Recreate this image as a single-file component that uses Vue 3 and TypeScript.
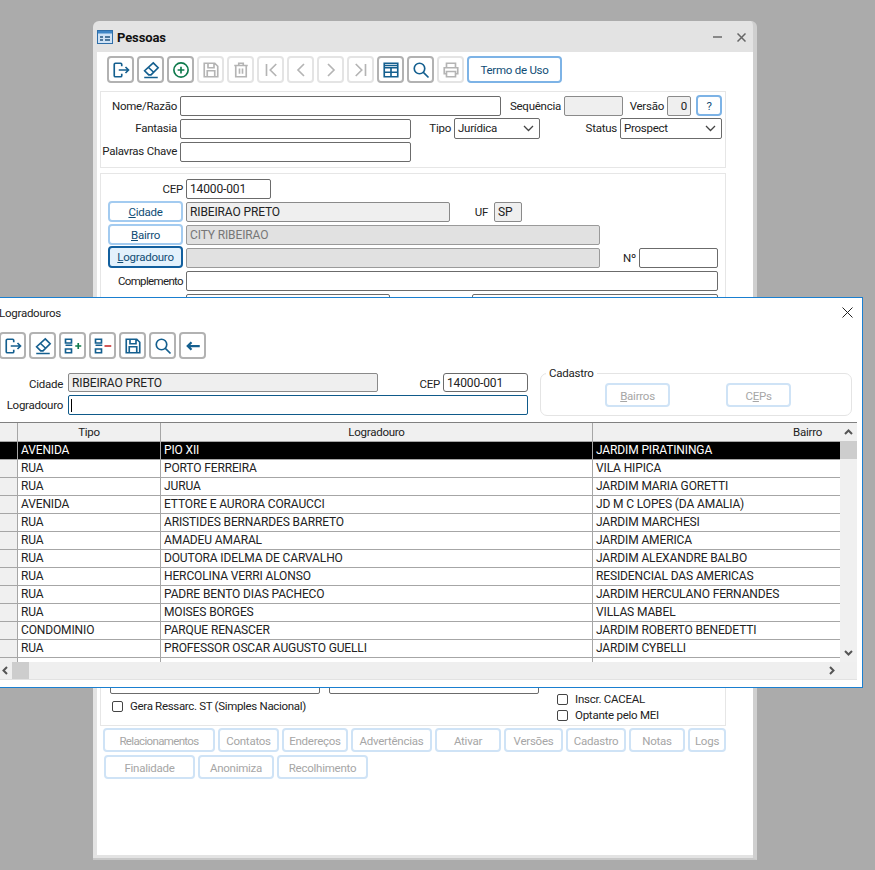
<script setup lang="ts">
interface Tool { d: string; tone: string }
const exit = 'M13 7V4.5A1.5 1.5 0 0 0 11.5 3h-7A1.5 1.5 0 0 0 3 4.5v15A1.5 1.5 0 0 0 4.5 21h7a1.5 1.5 0 0 0 1.500-1.500V17M9 12h13M18 8l4 4-4 4'
const eraser = 'M15 2.500l6.500 6.500-9.500 9.500H9L3.500 13zM8 8l7.500 7M3 22h18'
const search = 'M10 3a7 7 0 1 1 0 14a7 7 0 1 1 0-14zM15.500 15.500L22 22'
const save = 'M3 3h14l4 4v14H3zM8 3v6h8V3M7 21v-8h10v8'
const mainTools: Tool[] = [
  { d: exit, tone: 'blue' },
  { d: eraser, tone: 'blue' },
  { d: 'M12 2.500a9.500 9.500 0 1 1 0 19a9.500 9.500 0 1 1 0-19zM12 7.500v9M7.500 12h9', tone: 'green' },
  { d: save, tone: 'off' },
  { d: 'M3 6h18M9 6V3h6v3M5 6v15h14V6M10 10v7M14 10v7', tone: 'off' },
  { d: 'M6 4v16M19 4l-8 8 8 8', tone: 'off' },
  { d: 'M16 4l-8 8 8 8', tone: 'off' },
  { d: 'M8 4l8 8-8 8', tone: 'off' },
  { d: 'M18 4v16M5 4l8 8-8 8', tone: 'off' },
  { d: 'M3 3h18v18H3zM3 6h18M3 9h18M3 15h18M12 9v12', tone: 'blue' },
  { d: search, tone: 'blue' },
  { d: 'M6 8V3h12v5M6 17H3V9h18v8h-3M6 14h12v7H6z', tone: 'off' },
]
const listShape = 'M2 3h8v5H2zM2 11h9M2 16h8v5H2z'
const modalTools: { d: string; extra?: string; extraTone?: string; sw?: number }[] = [
  { d: exit },
  { d: eraser },
  { d: listShape, extra: 'M15 12h8M19 8v8', extraTone: 'green' },
  { d: listShape, extra: 'M14 12h9', extraTone: 'red' },
  { d: save },
  { d: search },
  { d: 'M21 12H5M10 7l-5 5 5 5', sw: 3 },
]
const actionRows = [
  [
    { t: 'Relacionamentos', w: 112, tight: true }, { t: 'Contatos', w: 61 }, { t: 'Endereços', w: 66 },
    { t: 'Advertências', w: 81 }, { t: 'Ativar', w: 66 }, { t: 'Versões', w: 59 },
    { t: 'Cadastro', w: 60 }, { t: 'Notas', w: 56 }, { t: 'Logs', w: 38 },
  ],
  [{ t: 'Finalidade', w: 91 }, { t: 'Anonimiza', w: 76 }, { t: 'Recolhimento', w: 91 }],
]
const rows = [
  ['AVENIDA', 'PIO XII', 'JARDIM PIRATININGA'],
  ['RUA', 'PORTO FERREIRA', 'VILA HIPICA'],
  ['RUA', 'JURUA', 'JARDIM MARIA GORETTI'],
  ['AVENIDA', 'ETTORE E AURORA CORAUCCI', 'JD M C LOPES (DA AMALIA)'],
  ['RUA', 'ARISTIDES BERNARDES BARRETO', 'JARDIM MARCHESI'],
  ['RUA', 'AMADEU AMARAL', 'JARDIM AMERICA'],
  ['RUA', 'DOUTORA IDELMA DE CARVALHO', 'JARDIM ALEXANDRE BALBO'],
  ['RUA', 'HERCOLINA VERRI ALONSO', 'RESIDENCIAL DAS AMERICAS'],
  ['RUA', 'PADRE BENTO DIAS PACHECO', 'JARDIM HERCULANO FERNANDES'],
  ['RUA', 'MOISES BORGES', 'VILLAS MABEL'],
  ['CONDOMINIO', 'PARQUE RENASCER', 'JARDIM ROBERTO BENEDETTI'],
  ['RUA', 'PROFESSOR OSCAR AUGUSTO GUELLI', 'JARDIM CYBELLI'],
  ['', '', ''],
]
</script>

<template>
  <div class="desktop">
    <section class="window">
      <header class="win-title">
        <svg class="win-icon" width="16" height="14" viewBox="0 0 16 14">
          <rect x="0.500" y="0.500" width="15" height="13" fill="#cfe2f5" stroke="#2f6ea8" />
          <rect x="1" y="1" width="14" height="2.500" fill="#3f86c6" />
          <path d="M3 7h3M8 7h5M3 10h3M8 10h5" stroke="#24557f" stroke-width="1.500" />
        </svg>
        <span class="win-name">Pessoas</span>
        <span class="win-min"></span>
        <svg class="win-close" width="9" height="9" viewBox="0 0 9 9"><path d="M0.500 0.500l8 8M8.500 0.500l-8 8" stroke="#666" stroke-width="1.500" /></svg>
      </header>
      <div class="win-body">
        <div class="toolbar">
          <button v-for="(tool, i) in mainTools" :key="i" class="tool" :class="{ 'tool-off': tool.tone === 'off' }">
            <svg width="18" height="18" viewBox="0 0 24 24" fill="none" stroke-width="2.200" :class="'tone-' + tool.tone"><path :d="tool.d" /></svg>
          </button>
          <button class="btn btn-termo">Termo de Uso</button>
        </div>

        <div class="panel panel-top">
          <div class="row row-a">
            <span class="lbl w76">Nome/Razão</span>
            <div class="in w321"></div>
            <span class="lbl w60">Sequência</span>
            <div class="in ro w59"></div>
            <span class="lbl w41">Versão</span>
            <div class="in ro w24 num">0</div>
            <button class="btn btn-help">?</button>
          </div>
          <div class="row row-b">
            <span class="lbl w76">Fantasia</span>
            <div class="in w231"></div>
            <span class="lbl w40">Tipo</span>
            <div class="in sel w86">Jurídica<svg width="11" height="7" viewBox="0 0 11 7"><path d="M1 1l4.500 4.500L10 1" fill="none" stroke="#444" stroke-width="1.300" /></svg></div>
            <span class="lbl w77">Status</span>
            <div class="in sel w102">Prospect<svg width="11" height="7" viewBox="0 0 11 7"><path d="M1 1l4.500 4.500L10 1" fill="none" stroke="#444" stroke-width="1.300" /></svg></div>
          </div>
          <div class="row row-c">
            <span class="lbl w76">Palavras Chave</span>
            <div class="in w231"></div>
          </div>
        </div>

        <div class="panel panel-addr">
          <div class="row row-cep">
            <span class="lbl w82">CEP</span>
            <div class="in w85 caps">14000-001</div>
          </div>
          <div class="row row-link">
            <button class="btn btn-link"><u>C</u>idade</button>
            <div class="in ro w264 caps">RIBEIRAO PRETO</div>
            <span class="lbl w38">UF</span>
            <div class="in ro w28 caps">SP</div>
          </div>
          <div class="row row-link">
            <button class="btn btn-link"><u>B</u>airro</button>
            <div class="in dis w414 caps">CITY RIBEIRAO</div>
          </div>
          <div class="row row-link">
            <button class="btn btn-link btn-active"><u>L</u>ogradouro</button>
            <div class="in dis w414"></div>
            <span class="lbl w36">Nº</span>
            <div class="in w79"></div>
          </div>
          <div class="row row-comp">
            <span class="lbl w82 tight">Complemento</span>
            <div class="in w532"></div>
          </div>
          <div class="row row-under">
            <div class="in w204"></div>
            <div class="in w246"></div>
          </div>
          <div class="lower">
            <div class="lower-left">
              <div class="pair">
                <div class="in w210"></div>
                <div class="in w210"></div>
              </div>
              <label class="check check-gera"><i></i>Gera Ressarc. ST (Simples Nacional)</label>
            </div>
            <div class="lower-right">
              <label class="check"><i></i>Inscr. CACEAL</label>
              <label class="check"><i></i>Optante pelo MEI</label>
            </div>
          </div>
        </div>

        <div v-for="(line, i) in actionRows" :key="i" class="actions" :class="{ 'actions-2': i === 1 }">
          <button v-for="a in line" :key="a.t" class="btn btn-off" :class="{ tight: 'tight' in a }" :style="{ width: a.w + 'px' }">{{ a.t }}</button>
        </div>
      </div>
    </section>

    <section class="modal">
      <header class="modal-title">
        <span>Logradouros</span>
        <svg width="11" height="11" viewBox="0 0 11 11"><path d="M0.500 0.500l10 10M10.500 0.500l-10 10" stroke="#222" stroke-width="1" /></svg>
      </header>
      <div class="modal-tools">
        <button v-for="(tool, i) in modalTools" :key="i" class="tool">
          <svg width="18" height="18" viewBox="0 0 24 24" fill="none" :stroke-width="tool.sw ?? 2.2" class="tone-blue">
            <path :d="tool.d" />
            <path v-if="tool.extra" :d="tool.extra" :class="'tone-' + tool.extraTone" />
          </svg>
        </button>
      </div>
      <div class="modal-form">
        <div class="modal-fields">
          <div class="row m-row">
            <span class="lbl w65">Cidade</span>
            <div class="in ro w310 caps">RIBEIRAO PRETO</div>
            <span class="lbl w63">CEP</span>
            <div class="in w85 m-cep caps">14000-001</div>
          </div>
          <div class="row m-row m-row-2">
            <span class="lbl w65">Logradouro</span>
            <div class="in focus w460"><b class="caret"></b></div>
          </div>
        </div>
        <div class="group">
          <span class="legend">Cadastro</span>
          <button class="btn btn-off btn-g"><u>B</u>airros</button>
          <button class="btn btn-off btn-g">C<u>E</u>Ps</button>
        </div>
      </div>

      <div class="grid-wrap">
        <div class="grid-top">
          <div class="grid">
            <div class="g-row g-head">
              <div class="g-cell"></div>
              <div class="g-cell center">Tipo</div>
              <div class="g-cell center">Logradouro</div>
              <div class="g-cell right">Bairro</div>
            </div>
            <div v-for="(r, i) in rows" :key="i" class="g-row caps" :class="{ selected: i === 0 }">
              <div class="g-cell g-ind"></div>
              <div class="g-cell">{{ r[0] }}</div>
              <div class="g-cell">{{ r[1] }}</div>
              <div class="g-cell">{{ r[2] }}</div>
            </div>
          </div>
          <div class="v-scroll">
            <svg width="9" height="6" viewBox="0 0 9 6"><path d="M1 5l3.500-3.500L8 5" fill="none" stroke="#555" stroke-width="2" /></svg>
            <div class="v-thumb"></div>
            <svg class="v-down" width="9" height="6" viewBox="0 0 9 6"><path d="M1 1l3.500 3.500L8 1" fill="none" stroke="#555" stroke-width="2" /></svg>
          </div>
        </div>
        <div class="h-scroll">
          <svg width="6" height="9" viewBox="0 0 6 9"><path d="M5 1L1.500 4.500 5 8" fill="none" stroke="#555" stroke-width="2" /></svg>
          <div class="h-thumb"></div>
          <svg class="h-next" width="6" height="9" viewBox="0 0 6 9"><path d="M1 1l3.500 3.500L1 8" fill="none" stroke="#555" stroke-width="2" /></svg>
        </div>
      </div>
    </section>
  </div>
</template>

<style>
html, body { margin: 0; background: #ababab; }
</style>

<style scoped>
.desktop {
  position: relative;
  width: 875px;
  height: 870px;
  overflow: hidden;
  background: #ababab;
  font-family: Roboto, "Liberation Sans", sans-serif;
  font-size: 11.5px;
  letter-spacing: -0.25px;
  color: #222;
}
.caps { font-size: 12px; letter-spacing: -0.13px; }
button { font: inherit; letter-spacing: inherit; padding: 0; background: #fff; cursor: default; }
.window {
  position: absolute;
  left: 93px;
  top: 21px;
  width: 664px;
  height: 839px;
  box-sizing: border-box;
  background: #e3e3e3;
  border-radius: 6px 6px 0 0;
  padding: 0 0 3px 4px;
  display: flex;
  flex-direction: column;
  border-right: 4px solid #cfcfcf;
  border-bottom: 2px solid #c8c8c8;
}
.win-title { height: 31px; display: flex; align-items: center; flex: none; }
.win-icon { flex: none; margin-top: 1px; }
.win-name { margin-left: 4px; font-size: 13px; font-weight: 700; color: #111; margin-top: 1px; letter-spacing: -0.1px; }
.win-min { width: 9px; height: 2px; background: #888; margin-left: auto; margin-right: 15px; margin-top: 1px; }
.win-close { margin-right: 7px; margin-top: 1px; }
.win-body { flex: 1; background: #fff; min-height: 0; }

.toolbar { display: flex; gap: 3px; padding: 4px 0 0 10px; height: 27px; }
.tool {
  width: 27px;
  height: 27px;
  flex: none;
  box-sizing: border-box;
  border: 2px solid #b2b2b2;
  border-radius: 4px;
  display: flex;
  align-items: center;
  justify-content: center;
}
.tool-off { border-color: #e4e4e4; }
.tone-blue { stroke: #145f8f; }
.tone-green { stroke: #0e7a4c; }
.tone-off { stroke: #b4b4b4; }
.tone-red { stroke: #c83232; }
.btn {
  box-sizing: border-box;
  flex: none;
  border: 2px solid #a3cbf0;
  border-radius: 4px;
  color: #0f4c75;
  text-align: center;
}
.btn-termo { width: 95px; height: 27px; margin-left: 0; border-color: #7db3e6; }
.btn-help { width: 26px; height: 21px; margin-left: 5px; border-color: #7db3e6; }
.panel { box-sizing: border-box; margin-left: 3px; width: 626px; border: 1px solid #e6e6e6; }
.panel-top { margin-top: 8px; height: 77px; padding-top: 3px; }
.panel-addr { margin-top: 5px; height: 553px; padding-top: 5px; }
.row { display: flex; align-items: flex-end; }
.row-a { height: 21px; }
.row-b { height: 21px; margin-top: 2px; }
.row-c { height: 20px; margin-top: 3px; }
.row-b .lbl, .row-c .lbl { margin-bottom: 2px; }
.lbl { flex: none; box-sizing: border-box; text-align: right; padding-right: 3px; align-self: center; white-space: nowrap; }
.in {
  box-sizing: border-box;
  flex: none;
  height: 20px;
  line-height: 18px;
  padding: 0 3px;
  background: #fff;
  border: 1px solid #6b6b6b;
  border-radius: 2px;
  white-space: nowrap;
  overflow: hidden;
}
.ro { background: #efefef; border-color: #8a8a8a; }
.dis { background: #e1e1e1; color: #777; border-color: #9a9a9a; }
.num { text-align: right; }
.sel { height: 21px; display: flex; align-items: center; justify-content: space-between; padding-right: 5px; line-height: 19px; }
.w24 { width: 24px; } .w28 { width: 28px; } .w36 { width: 39px; } .w38 { width: 44px; padding-right: 6px; }
.w40 { width: 43px; } .w41 { width: 44px; } .w59 { width: 59px; } .w60 { width: 63px; }
.w63 { width: 65px; } .w65 { width: 71px; padding-right: 5px; } .w76 { width: 79px; }
.w77 { width: 80px; } .w79 { width: 79px; } .w82 { width: 85px; } .w85 { width: 85px; }
.w86 { width: 86px; } .w102 { width: 102px; } .w204 { width: 204px; } .w210 { width: 210px; }
.w231 { width: 231px; } .w246 { width: 246px; } .w264 { width: 264px; } .w310 { width: 310px; }
.w321 { width: 321px; } .w414 { width: 414px; } .w460 { width: 460px; } .w532 { width: 532px; }
.tight { letter-spacing: -0.65px; }
.row-cep { height: 20px; }
.row-link { height: 21px; margin-top: 2px; }
.btn-link { width: 75px; height: 21px; margin-left: 7px; margin-right: 3px; background: #fff; }
.btn-active { height: 22px; margin-top: -1px; background: #e3f1fc; border-color: #125f9e; }
.row-comp { height: 20px; margin-top: 3px; }
.row-under { height: 20px; margin-top: 3px; margin-left: 85px; gap: 82px; }
.lower { display: flex; margin-top: 360px; }
.lower-left { width: 456px; flex: none; }
.pair { display: flex; gap: 9px; margin-left: 9px; }
.check { display: flex; align-items: center; height: 16px; }
.check i { width: 11px; height: 11px; border: 1px solid #444; border-radius: 2px; margin-right: 7px; box-sizing: border-box; flex: none; }
.check-gera { margin-left: 11px; margin-top: 4px; letter-spacing: -0.32px; }
.lower-right { padding-top: 17px; }
.actions { display: flex; gap: 3px; margin: 2px 0 0 6px; }
.actions-2 { margin: 3px 0 0 7px; }
.btn-off { height: 24px; border-color: #cfe3f6; color: #a6a6a6; padding-top: 1px; }

.modal {
  position: absolute;
  left: -4px;
  top: 297px;
  width: 867px;
  height: 391px;
  box-sizing: border-box;
  background: #fff;
  border: 1px solid #1a7fd0;
}
.modal-title { height: 29px; display: flex; align-items: center; justify-content: space-between; padding: 0 9px 0 2px; }
.modal-tools { display: flex; gap: 3px; padding: 5px 0 0 2px; height: 27px; }
.modal-form { display: flex; margin-top: 14px; height: 43px; }
.modal-fields { width: 543px; flex: none; }
.m-row { height: 19px; }
.m-row .in { height: 19px; line-height: 18px; }
.m-row .lbl { margin-top: 2px; }
.m-row-2 { height: 20px; margin-top: 3px; }
.m-row-2 .in { height: 20px; }
.m-row-2 .lbl { margin-top: 0; }
.m-cep { border-radius: 3px; }
.focus { border-color: #0f5a8a; position: relative; }
.caret { position: absolute; left: 2px; top: 3px; width: 1px; height: 13px; background: #000; }
.group {
  position: relative;
  box-sizing: border-box;
  width: 312px;
  height: 43px;
  border: 1px solid #e4e4e4;
  border-radius: 7px;
  padding: 9px 0 0 64px;
  display: flex;
  gap: 56px;
}
.legend { position: absolute; left: 5px; top: -8px; background: #fff; padding: 0 3px 0 3px; line-height: 14px; }
.btn-g { width: 65px; height: 24px; }
.grid-wrap { margin-top: 6px; width: 860px; border-top: 1px solid #808080; }
.grid-top { display: flex; height: 239px; }
.grid { width: 843px; flex: none; overflow: hidden; }
.g-row { display: grid; grid-template-columns: 21px 143px 432px 1fr; height: 18px; box-sizing: border-box; border-bottom: 1px solid #a6a6a6; }
.g-cell { box-sizing: border-box; border-right: 1px solid #a6a6a6; padding-left: 3px; line-height: 17px; white-space: nowrap; overflow: hidden; }
.g-cell:last-child { border-right: 0; }
.g-ind { background: #f0f0f0; }
.g-head { height: 19px; background: #f0f0f0; }
.g-head .g-cell { line-height: 19px; }
.center { text-align: center; padding-left: 0; }
.right { text-align: right; padding-right: 18px; }
.selected { background: #000; color: #fff; }
.selected .g-ind { background: #000; }
.v-scroll { flex: 1; background: #f0f0f0; display: flex; flex-direction: column; align-items: center; padding-top: 6px; box-sizing: border-box; }
.v-thumb { width: 100%; height: 18px; background: #cdcdcd; margin-top: 6px; flex: none; }
.v-down { margin-top: auto; margin-bottom: 6px; }
.h-scroll { height: 18px; box-sizing: border-box; background: #efefef; border-bottom: 1px solid #e2e2e2; display: flex; align-items: center; padding-left: 5px; }
.h-thumb { width: 17px; height: 17px; background: #cdcdcd; margin-left: 4px; }
.h-next { margin-left: auto; margin-right: 22px; }
</style>
